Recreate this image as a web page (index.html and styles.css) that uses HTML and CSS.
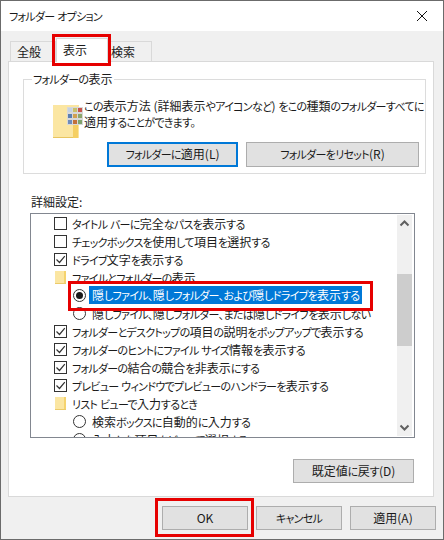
FILE: index.html
```html
<!DOCTYPE html>
<html lang="ja">
<head>
<meta charset="utf-8">
<title>フォルダー オプション</title>
<link rel="stylesheet" href="styles.css">
</head>
<body>
<div class="window">
  <div class="titlebar">
    <span class="title">フォルダー オプション</span>
    <svg class="close" width="10" height="10" viewBox="0 0 10 10"><path d="M0 0L10 10M10 0L0 10" stroke="#111" stroke-width="1" fill="none"/></svg>
  </div>
  <div class="content">
    <div class="tabs">
      <div class="tab tab-first">全般</div>
      <div class="tab tab-active">表示</div>
      <div class="tab tab-last">検索</div>
    </div>
    <div class="panel">
      <div class="group">
        <div class="legend">フォルダーの表示</div>
        <div class="desc">
          <svg class="big-folder" width="30" height="33" viewBox="0 0 30 33">
            <rect x="0" y="0" width="26" height="33" fill="#fbe6a2"/>
            <path d="M0 32H26V33H0Z" fill="#e8c560"/>
            <rect x="20" y="20" width="5" height="13" fill="#f5cf62"/>
            <rect x="25" y="20" width="1" height="13" fill="#fbe39b"/>
            <rect x="14" y="2" width="16" height="18" fill="#d8d8d8"/>
            <rect x="15" y="3" width="4" height="4" fill="#c4d2e2"/><rect x="20" y="3" width="4" height="4" fill="#c9c06a"/><rect x="25" y="3" width="4" height="4" fill="#c8544c"/>
            <rect x="15" y="9" width="4" height="4" fill="#5c7fb0"/><rect x="20" y="9" width="4" height="4" fill="#d0a050"/><rect x="25" y="9" width="4" height="4" fill="#8da66b"/>
            <rect x="15" y="15" width="4" height="4" fill="#6f8cba"/><rect x="20" y="15" width="4" height="4" fill="#c2703a"/><rect x="25" y="15" width="4" height="4" fill="#7fa36b"/>
          </svg>
          <p class="desc-text">この表示方法 (詳細表示やアイコンなど) をこの種類のフォルダーすべてに<br>適用することができます。</p>
        </div>
        <div class="group-buttons">
          <button class="btn btn-default btn-apply-folder">フォルダーに適用(L)</button>
          <button class="btn btn-reset-folder">フォルダーをリセット(R)</button>
        </div>
      </div>
      <div class="section-label">詳細設定:</div>
      <div class="list">
        <div class="rows">
          <div class="row"><span class="check"></span><span>タイトル バーに完全なパスを表示する</span></div>
          <div class="row"><span class="check"></span><span>チェックボックスを使用して項目を選択する</span></div>
          <div class="row"><span class="check"><svg width="11" height="11" viewBox="0 0 11 11"><path d="M1.5 5.5L4.5 8.5L9.8 2.2" stroke="#333" stroke-width="1.2" fill="none"/></svg></span><span>ドライブ文字を表示する</span></div>
          <div class="row"><svg class="small-folder" width="11" height="13" viewBox="0 0 11 13"><rect width="11" height="13" fill="#fbe6a2"/><rect x="9" width="2" height="13" fill="#f5d36e"/><rect y="12" width="11" height="1" fill="#eccb6a"/></svg><span>ファイルとフォルダーの表示</span></div>
          <div class="row row-sub"><span class="radio radio-on"></span><span class="selected">隠しファイル、隠しフォルダー、および隠しドライブを表示する</span></div>
          <div class="row row-sub"><span class="radio"></span><span class="plain">隠しファイル、隠しフォルダー、または隠しドライブを表示しない</span></div>
          <div class="row"><span class="check"><svg width="11" height="11" viewBox="0 0 11 11"><path d="M1.5 5.5L4.5 8.5L9.8 2.2" stroke="#333" stroke-width="1.2" fill="none"/></svg></span><span>フォルダーとデスクトップの項目の説明をポップアップで表示する</span></div>
          <div class="row"><span class="check"><svg width="11" height="11" viewBox="0 0 11 11"><path d="M1.5 5.5L4.5 8.5L9.8 2.2" stroke="#333" stroke-width="1.2" fill="none"/></svg></span><span>フォルダーのヒントにファイル サイズ情報を表示する</span></div>
          <div class="row"><span class="check"><svg width="11" height="11" viewBox="0 0 11 11"><path d="M1.5 5.5L4.5 8.5L9.8 2.2" stroke="#333" stroke-width="1.2" fill="none"/></svg></span><span>フォルダーの結合の競合を非表示にする</span></div>
          <div class="row"><span class="check"><svg width="11" height="11" viewBox="0 0 11 11"><path d="M1.5 5.5L4.5 8.5L9.8 2.2" stroke="#333" stroke-width="1.2" fill="none"/></svg></span><span>プレビュー ウィンドウでプレビューのハンドラーを表示する</span></div>
          <div class="row"><svg class="small-folder" width="11" height="13" viewBox="0 0 11 13"><rect width="11" height="13" fill="#fbe6a2"/><rect x="9" width="2" height="13" fill="#f5d36e"/><rect y="12" width="11" height="1" fill="#eccb6a"/></svg><span>リスト ビューで入力するとき</span></div>
          <div class="row row-sub"><span class="radio"></span><span class="plain">検索ボックスに自動的に入力する</span></div>
          <div class="row row-sub"><span class="radio"></span><span class="plain">入力した項目をビューで選択する</span></div>
        </div>
        <div class="scrollbar">
          <svg class="arrow" width="15" height="16" viewBox="0 0 15 16"><path d="M3.5 10.5L7.5 6.5L11.5 10.5" stroke="#606060" stroke-width="2" fill="none"/></svg>
          <div class="track"><div class="thumb"></div></div>
          <svg class="arrow" width="15" height="16" viewBox="0 0 15 16"><path d="M3.5 5.5L7.5 9.5L11.5 5.5" stroke="#606060" stroke-width="2" fill="none"/></svg>
        </div>
      </div>
      <div class="restore-row"><button class="btn btn-restore">既定値に戻す(D)</button></div>
    </div>
    <div class="footer">
      <button class="btn btn-footer">OK</button>
      <button class="btn btn-footer">キャンセル</button>
      <button class="btn btn-footer">適用(A)</button>
    </div>
  </div>
  <div class="mark mark-tab"></div>
  <div class="mark mark-row"></div>
  <div class="mark mark-ok"></div>
</div>
<script src="kana.js"></script>
</body>
</html>
```

FILE: styles.css
```css
* { box-sizing: border-box; }
html, body { margin: 0; padding: 0; }
body {
  width: 444px;
  height: 540px;
  overflow: hidden;
  font-family: "Noto Sans CJK JP", "Noto Sans", sans-serif;
  font-size: 12px;
  font-feature-settings: "palt";
  color: #1a1a1a;
}
.kana {
  font-size: 11px;
  letter-spacing: -0.7px;
}
.window {
  position: relative;
  width: 444px;
  height: 540px;
  border: 1px solid #6b6b6b;
  background: #f0f0f0;
  display: flex;
  flex-direction: column;
}
.titlebar {
  height: 30px;
  background: #fff;
  display: flex;
  align-items: center;
  justify-content: space-between;
  padding: 0 16px 0 8px;
  flex: none;
}
.title { line-height: 28px; }
.content {
  flex: 1;
  padding: 10px 9px 0 7px;
  display: flex;
  flex-direction: column;
}
.tabs {
  display: flex;
  height: 20px;
  padding-left: 2px;
  align-items: flex-start;
  position: relative;
  z-index: 1;
}
.tab {
  height: 20px;
  line-height: 20px;
  border: 1px solid #d9d9d9;
  border-bottom: 0;
  background: #f0f0f0;
}
.tab-first { width: 46px; padding-left: 6px; }
.tab-active {
  width: 52px;
  height: 24px;
  margin-top: -3px;
  padding-left: 6px;
  background: #fff;
  line-height: 22px;
}
.tab-last { width: 44px; padding-left: 2px; }
.panel {
  height: 436px;
  background: #fff;
  border: 1px solid #d9d9d9;
  padding: 17px 8px 0 14px;
  flex: none;
}
.group {
  width: 403px;
  height: 95px;
  border: 1px solid #dcdcdc;
  padding: 0 6px 0 29px;
}
.legend {
  display: inline-block;
  background: #fff;
  margin: -9px 0 0 -21px;
  padding: 0 2px 0 1px;
  height: 16px;
  line-height: 16px;
  vertical-align: top;
}
.desc {
  display: flex;
  align-items: flex-start;
  margin-top: 1px;
  height: 44px;
}
.big-folder { margin-top: 7px; flex: none; }
.desc-text {
  margin: 0 0 0 1px;
  line-height: 16px;
  white-space: nowrap;
}
.group-buttons {
  display: flex;
  justify-content: flex-end;
  gap: 8px;
}
.btn {
  font: inherit;
  color: #1a1a1a;
  height: 25px;
  padding: 0 0 2px;
  background: #e1e1e1;
  border: 1px solid #adadad;
  border-radius: 0;
}
.btn-default { border: 2px solid #0078d7; }
.btn-apply-folder { width: 131px; }
.btn-reset-folder { width: 173px; }
.section-label {
  margin: 20px 0 0 8px;
  line-height: 16px;
  height: 16px;
}
.list {
  margin: 3px 0 0 7px;
  width: 385px;
  height: 225px;
  border: 1px solid #828790;
  background: #fff;
  display: flex;
  overflow: hidden;
}
.rows {
  flex: 1;
  min-width: 0;
  overflow: hidden;
  padding-left: 23px;
}
.row {
  height: 18px;
  display: flex;
  align-items: center;
  white-space: nowrap;
}
.row-sub { padding-left: 19px; }
.check {
  width: 13px;
  height: 13px;
  border: 1px solid #333;
  margin-right: 5px;
  flex: none;
  display: flex;
  align-items: center;
  justify-content: center;
  background: #fff;
}
.small-folder { margin: 0 6px 0 1px; flex: none; }
.radio {
  width: 13px;
  height: 13px;
  border: 1px solid #333;
  border-radius: 50%;
  margin-right: 3px;
  flex: none;
  background: #fff;
  position: relative;
}
.radio-on::after {
  content: "";
  position: absolute;
  left: 2px;
  top: 2px;
  width: 7px;
  height: 7px;
  border-radius: 50%;
  background: #1a1a1a;
}
.selected {
  background: #0078d7;
  color: #fff;
  padding: 0 3px;
  height: 18px;
  line-height: 18px;
}
.plain { padding: 0 3px; }
.scrollbar {
  width: 15px;
  margin: 1px 2px 1px 0;
  background: #f0f0f0;
  display: flex;
  flex-direction: column;
  flex: none;
}
.arrow { flex: none; display: block; }
.track { flex: 1; padding-top: 43px; }
.thumb { height: 72px; background: #cdcdcd; }
.restore-row {
  display: flex;
  justify-content: flex-end;
  margin: 21px 11px 0 0;
}
.btn-restore { width: 121px; height: 24px; }
.footer {
  display: flex;
  justify-content: flex-end;
  gap: 8px;
  margin: 9px -2px 0 0;
}
.btn-footer { width: 86px; height: 24px; }
.mark {
  position: absolute;
  border: 3px solid #e60000;
  pointer-events: none;
  z-index: 5;
}
.mark-tab { left: 51px; top: 33px; width: 59px; height: 32px; }
.mark-row { left: 67px; top: 280px; width: 305px; height: 30px; }
.mark-ok { left: 154px; top: 497px; width: 99px; height: 39px; }
```

FILE: kana.js
```js
// Windows' UI font sets kana narrower than kanji; wrap kana runs so CSS can do the same.
var walker = document.createTreeWalker(document.body, NodeFilter.SHOW_TEXT);
var nodes = [];
while (walker.nextNode()) {
  if (walker.currentNode.parentNode.tagName !== "SCRIPT") nodes.push(walker.currentNode);
}
nodes.forEach(function (node) {
  var parts = node.nodeValue.split(/([\u3001\u3002\u3040-\u30ff]+)/);
  if (parts.length < 2) return;
  var frag = document.createDocumentFragment();
  parts.forEach(function (part, i) {
    if (i % 2) {
      var span = document.createElement("span");
      span.className = "kana";
      span.textContent = part;
      frag.appendChild(span);
    } else if (part) {
      frag.appendChild(document.createTextNode(part));
    }
  });
  node.parentNode.replaceChild(frag, node);
});
```
